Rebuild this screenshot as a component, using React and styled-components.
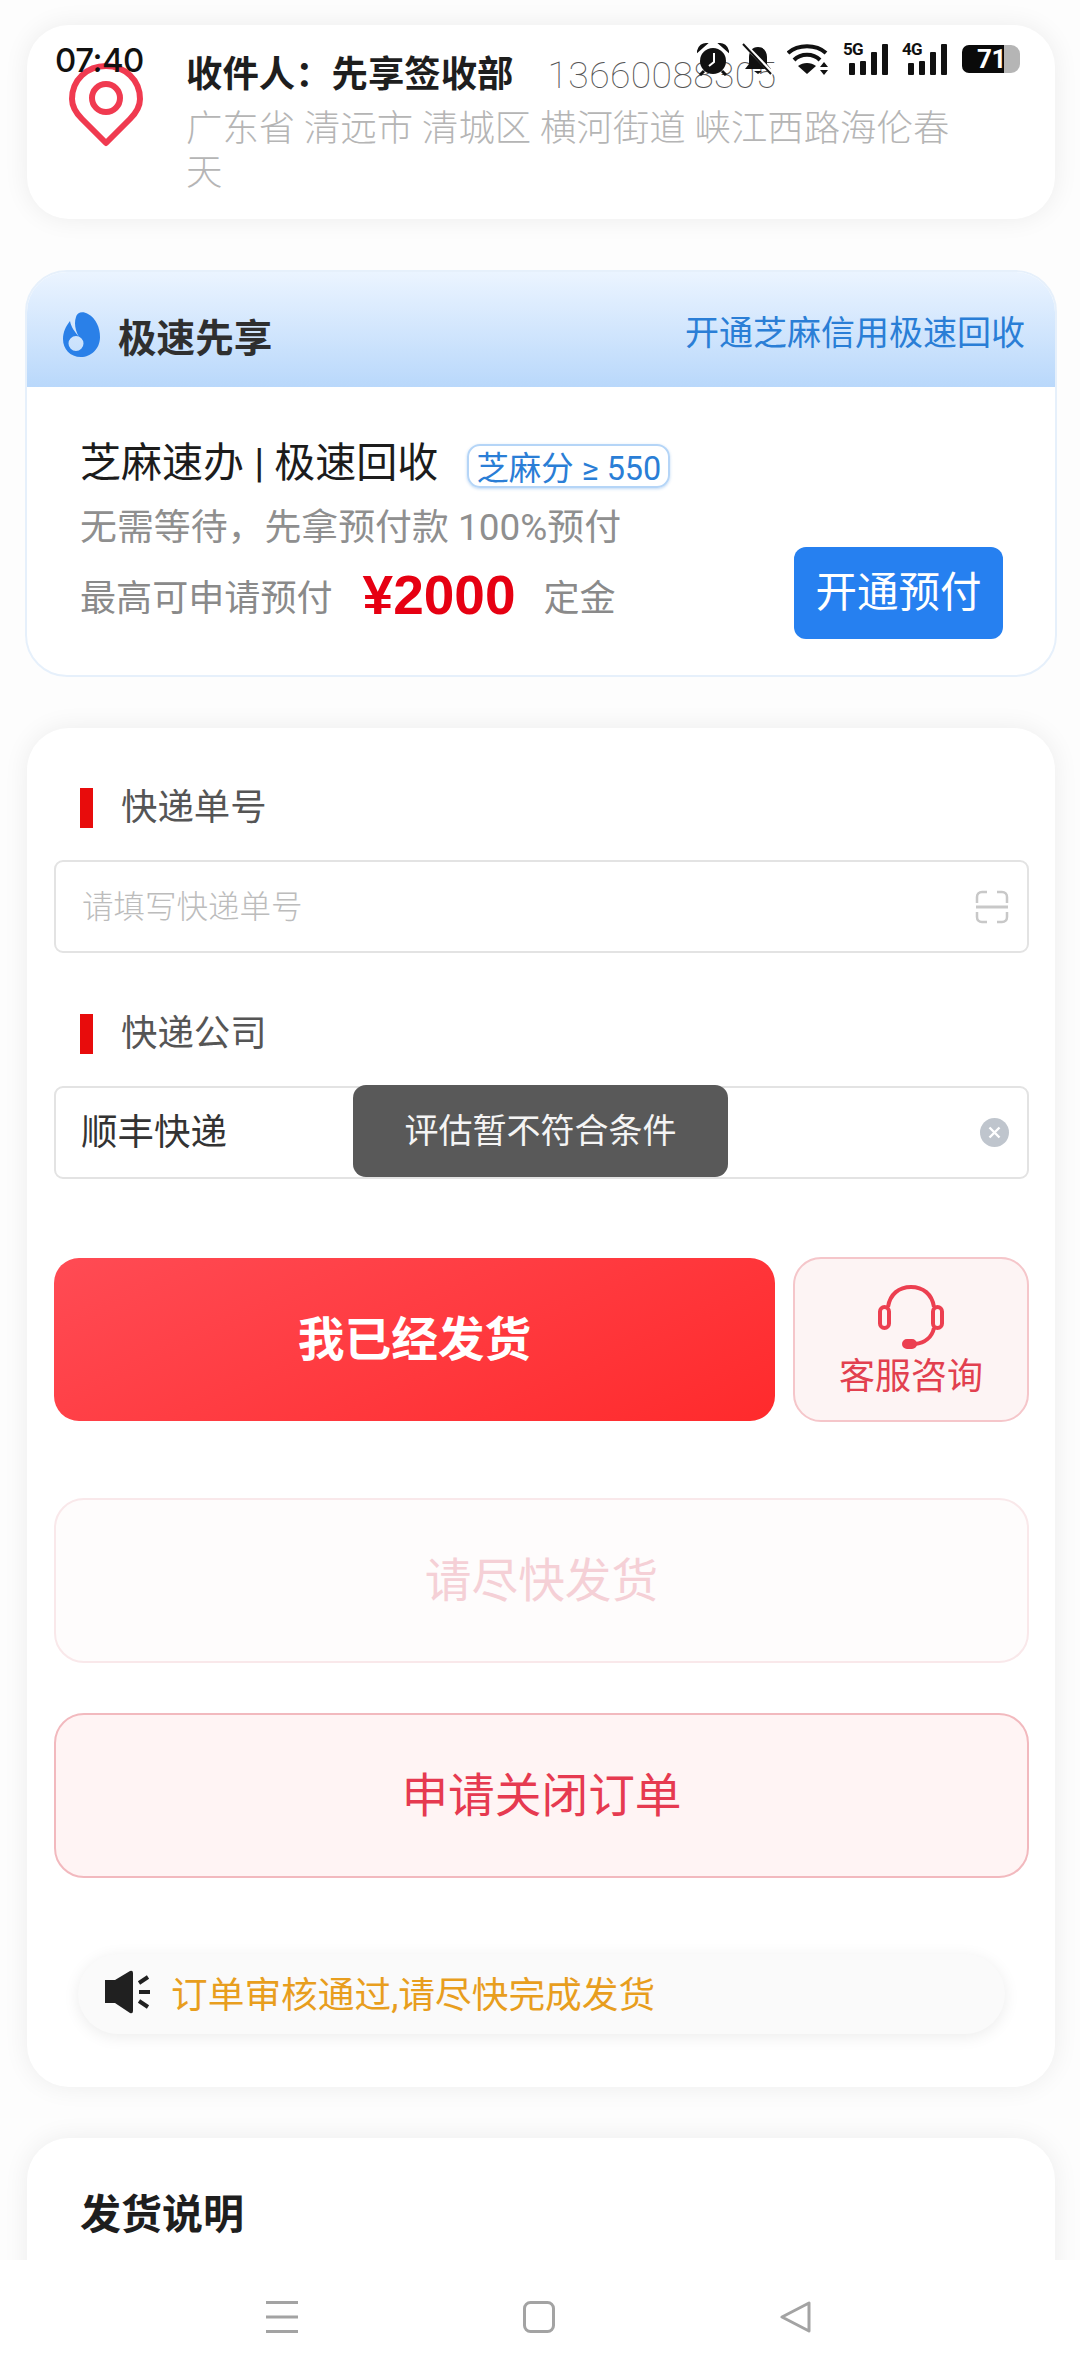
import React from "react";
import styled, { createGlobalStyle } from "styled-components";

const FONT = `Roboto, "Noto Sans CJK SC", sans-serif`;

const Global = createGlobalStyle`
  html, body { margin: 0; padding: 0; background: #fff; }
  * { box-sizing: border-box; }
`;

const Page = styled.div`
  position: relative;
  width: 1080px;
  height: 2376px;
  overflow: hidden;
  padding: 25px 25px 0 27px;
  display: flex;
  flex-direction: column;
  gap: 51px;
  background: #fdfdfd;
  font-family: ${FONT};
`;

/* status bar overlay */
const StatusBar = styled.div`
  position: absolute;
  top: 43px;
  left: 55px;
  right: 60px;
  height: 32px;
  display: flex;
  align-items: center;
  color: #111;
  z-index: 5;
`;
const Clock = styled.span`
  font: 500 33px/32px Inter, Roboto, sans-serif;
  letter-spacing: -0.5px;
  margin-top: 1px;
`;
const StatusIcons = styled.div`
  margin-left: auto;
  display: flex;
  align-items: center;
  gap: 13px;
`;
const Signal = styled.div`
  position: relative;
  width: 46px;
  height: 32px;
`;
const SignalLabel = styled.span`
  position: absolute;
  left: 0;
  top: -2px;
  font: 700 17px/17px Roboto, sans-serif;
  letter-spacing: -0.8px;
`;
const SignalSvg = styled.svg`
  position: absolute;
  right: 0;
  top: 0;
`;
const Battery = styled.div`
  position: relative;
  width: 58px;
  height: 28px;
  margin-left: 1px;
  border-radius: 7px 9px 9px 7px;
  background: linear-gradient(90deg, #0a0a0a 0, #0a0a0a 72%, #b5b5b5 72%, #b5b5b5 100%);
  display: flex;
  align-items: center;
  padding-left: 15px;
`;
const BatteryText = styled.span`
  font: 700 26px/28px Roboto, sans-serif;
  color: #fff;
  letter-spacing: -0.5px;
`;

/* cards */
const Card = styled.section`
  flex: none;
  background: #fff;
  border-radius: 42px;
  box-shadow: 0 0 26px rgba(0, 0, 0, 0.07);
`;

const AddressCard = styled(Card)`
  display: flex;
  align-items: flex-start;
  padding: 23px 40px 24px 42px;
  gap: 43px;
`;
const PinIcon = styled.svg`
  flex: none;
  margin-top: 15px;
`;
const AddressBody = styled.div`
  flex: 1;
  min-width: 0;
`;
const NameRow = styled.div`
  display: flex;
  align-items: center;
  height: 48px;
  gap: 34px;
`;
const Name = styled.span`
  font-size: 36.4px;
  font-weight: 700;
  color: #1e1e1e;
  white-space: nowrap;
  margin-bottom: 2px;
`;
const Phone = styled.span`
  font: 100 37.3px/48px Roboto, sans-serif;
  color: #555;
  letter-spacing: 0.4px;
  white-space: nowrap;
  margin-top: 6px;
`;
const Address = styled.div`
  margin-top: 11px;
  width: 772px;
  font-size: 36.4px;
  font-weight: 300;
  line-height: 44px;
  color: #b5b5b5;
`;

const CreditCard = styled(Card)`
  margin: 0 -2px;
  border: 2px solid #e6f0fb;
  overflow: hidden;
  box-shadow: none;
`;
const CreditHeader = styled.div`
  height: 115px;
  padding: 8px 30px 0 35px;
  display: flex;
  align-items: center;
  justify-content: space-between;
  background: linear-gradient(180deg, #ebf4ff 0%, #b9d8fb 100%);
`;
const CreditTitle = styled.div`
  display: flex;
  align-items: center;
  gap: 18px;
  padding-top: 2px;
  font-size: 38.6px;
  font-weight: 700;
  color: #2f2f2f;
`;
const CreditLink = styled.span`
  font-size: 34px;
  color: #2a7ed6;
  margin-bottom: 6px;
`;
const CreditBody = styled.div`
  display: flex;
  align-items: flex-end;
  justify-content: space-between;
  padding: 50px 52px 36px 53px;
`;
const CreditText = styled.div`
  padding-bottom: 16px;
`;
const CreditHeadline = styled.div`
  display: flex;
  align-items: center;
  height: 50px;
  padding-bottom: 6px;
  gap: 29px;
  font-size: 41px;
  color: #1c1c1c;
  white-space: nowrap;
`;
const ScoreBadge = styled.span`
  display: inline-flex;
  align-items: center;
  justify-content: center;
  width: 203px;
  height: 44px;
  margin-top: 13px;
  border: 2px solid #b5d5f7;
  border-radius: 13px;
  box-shadow: 0 1px 3px rgba(42, 126, 214, 0.3);
  font-size: 32.4px;
  color: #2a7ed6;
  white-space: nowrap;
`;
const CreditSub = styled.div`
  margin-top: 16px;
  font-size: 36.9px;
  line-height: 50px;
  color: #8f8f8f;
  white-space: nowrap;
`;
const CreditAmountRow = styled.div`
  margin-top: 20px;
  display: flex;
  align-items: center;
  height: 50px;
  padding-bottom: 6px;
  font-size: 36.1px;
  color: #8a8a8a;
  white-space: nowrap;
`;
const Amount = styled.span`
  margin: 0 28px 0 30px;
  font: 700 55px/50px "Liberation Sans", Arial, sans-serif;
  color: #e60012;
`;
const OpenButton = styled.div`
  flex: none;
  width: 209px;
  height: 92px;
  border-radius: 12px;
  background: #2680f0;
  color: #fff;
  font-size: 41.5px;
  display: flex;
  align-items: center;
  justify-content: center;
  padding-bottom: 9px;
`;

const FormCard = styled(Card)`
  padding: 60px 26px 53px 27px;
  display: flex;
  flex-direction: column;
`;
const FieldLabel = styled.div`
  display: flex;
  align-items: center;
  height: 40px;
  margin: ${(p) => (p.$first ? "0" : "61px")} 0 32px 26px;
  gap: 28px;
  font-size: 36.4px;
  color: #555;
`;
const FieldLabelText = styled.span`
  margin-bottom: 9px;
`;
const LabelBar = styled.i`
  display: block;
  width: 13px;
  height: 40px;
  background: #e80c0c;
`;
const Field = styled.div`
  height: 93px;
  border: 2px solid #e3e3e3;
  border-radius: 9px;
  padding: 0 18px 0 26px;
  display: flex;
  align-items: center;
  justify-content: space-between;
`;
const Placeholder = styled.span`
  font-size: 31.5px;
  font-weight: 300;
  color: #bcbcbc;
  margin-bottom: 6px;
`;
const FieldValue = styled.span`
  font-size: 36.5px;
  color: #333;
  margin: 0 0 6px -1px;
`;
const ClearDot = styled.span`
  width: 29px;
  height: 29px;
  border-radius: 50%;
  background: #bfc5cd;
  display: flex;
  align-items: center;
  justify-content: center;
`;

const Toast = styled.div`
  position: absolute;
  left: 353px;
  top: 1085px;
  width: 375px;
  height: 92px;
  border-radius: 13px;
  background: #595959;
  color: #f4f4f4;
  font-size: 34px;
  display: flex;
  align-items: center;
  justify-content: center;
  padding-bottom: 5px;
  z-index: 3;
`;

const ActionRow = styled.div`
  margin-top: 78px;
  display: flex;
  gap: 18px;
  height: 165px;
`;
const ShipButton = styled.div`
  flex: 1;
  margin: 1px 0;
  border-radius: 25px;
  background: linear-gradient(155deg, #ff4b54 0%, #ff2a2c 100%);
  color: #fff;
  font-size: 46.7px;
  font-weight: 700;
  display: flex;
  align-items: center;
  justify-content: center;
  padding-bottom: 8px;
`;
const ServiceButton = styled.div`
  flex: none;
  width: 236px;
  border: 2px solid #f5c6ca;
  border-radius: 28px;
  background: #fdf4f4;
  color: #e2404f;
  font-size: 36px;
  line-height: 44px;
  display: flex;
  flex-direction: column;
  align-items: center;
  padding-top: 26px;
  gap: 4px;
`;
const WideButton = styled.div`
  height: 165px;
  margin-top: ${(p) => p.$top}px;
  border: 2px solid ${(p) => (p.$faded ? "#f9e8ea" : "#f2b9be")};
  border-radius: 30px;
  background: ${(p) => (p.$faded ? "#fefcfc" : "#fff4f4")};
  color: ${(p) => (p.$faded ? "#f5d0d6" : "#e63a50")};
  font-size: 46.7px;
  display: flex;
  align-items: center;
  justify-content: center;
  padding-bottom: 8px;
`;
const Notice = styled.div`
  height: 80px;
  margin: 76px 24px 0;
  border-radius: 40px;
  background: #fafafa;
  box-shadow: 0 3px 16px rgba(0, 0, 0, 0.08);
  display: flex;
  align-items: center;
  padding: 0 0 4px 27px;
  gap: 20px;
  font-size: 36.7px;
  color: #e89e1e;
  white-space: nowrap;
`;

const GuideCard = styled(Card)`
  padding: 52px 53px 80px;
  min-height: 240px;
`;
const GuideTitle = styled.h2`
  margin: 0;
  font-size: 41px;
  line-height: 50px;
  font-weight: 700;
  color: #1e1e1e;
`;

const NavBar = styled.nav`
  position: absolute;
  left: 0;
  right: 0;
  bottom: 0;
  height: 116px;
  background: #fff;
  display: flex;
  align-items: flex-start;
  justify-content: center;
  gap: 225px;
  padding: 41px 4px 0 0;
  z-index: 4;
`;

const Pin = () => (
  <PinIcon width="74" height="84" viewBox="0 0 74 84" fill="none" stroke="#f03a50" strokeWidth="6">
    <path d="M37 80 L13 56 C7 50 3 43 3 36 C3 17 18 3 37 3 C56 3 71 17 71 36 C71 43 67 50 61 56 Z" strokeLinejoin="round" />
    <circle cx="37" cy="35" r="14" />
  </PinIcon>
);

const Drop = () => (
  <svg width="38" height="46" viewBox="0 0 38 46">
    <path
      fill="#2a80e8"
      fillRule="evenodd"
      d="M14 5 C15 0 21 -1 26 2 C34 6 38 16 38 25 C38 37 29 45 19 45 C8 45 1 37 1 27 C1 20 4 14 8 9 C9 15 13 20 17 25 C13 18 12 11 14 5 Z M14 24 A7.5 7.5 0 1 0 14 39 A7.5 7.5 0 1 0 14 24 Z"
    />
  </svg>
);

const Headset = () => (
  <svg width="66" height="66" viewBox="0 0 66 66" fill="none" stroke="#ec3f50" strokeWidth="4">
    <path d="M10 22 C12 9 21 2 33 2 C45 2 54 9 56 22" />
    <rect x="2" y="22" width="9" height="21" rx="4.5" />
    <rect x="55" y="22" width="9" height="21" rx="4.5" />
    <path d="M56 43 C54 52 47 58 37 59" />
    <rect x="26" y="56" width="11" height="6" rx="3" fill="#ec3f50" />
  </svg>
);

const Speaker = () => (
  <svg width="46" height="44" viewBox="0 0 46 44" fill="#202020">
    <path d="M0 10 H10 L25 1 Q28 0 28 3 V41 Q28 44 25 43 L10 33 H0 Z" />
    <path d="M34 13 L43 7 M34 22 H45 M34 31 L43 37" stroke="#202020" strokeWidth="4" />
  </svg>
);

const Scan = () => (
  <svg width="34" height="34" viewBox="0 0 34 34" fill="none" stroke="#c8c8c8" strokeWidth="2.5">
    <path d="M2 13 V7 C2 4 4 2 7 2 H12 M22 2 H27 C30 2 32 4 32 7 V13 M2 22 V27 C2 30 4 32 7 32 H12 M22 32 H27 C30 32 32 30 32 27 V22" />
    <path d="M1 17 H33" strokeWidth="3" />
  </svg>
);

const Alarm = () => (
  <svg width="32" height="33" viewBox="0 0 32 33" fill="#111">
    <circle cx="16" cy="18" r="13" />
    <path d="M1 8 C2 3 6 1 9 1 L1 8 Z M31 8 C30 3 26 1 23 1 L31 8 Z" stroke="#111" strokeWidth="2" />
    <path d="M7 28 L3 32 M25 28 L29 32" stroke="#111" strokeWidth="3" />
    <path d="M17 10 V19 L12 23" stroke="#fff" strokeWidth="2" fill="none" />
  </svg>
);

const BellOff = () => (
  <svg width="32" height="32" viewBox="0 0 32 32" fill="#111">
    <path d="M16 4 C22 4 25 9 25 14 V21 L29 26 H3 L7 21 V14 C7 9 10 4 16 4 Z" />
    <path d="M12 28 H20 L16 31 Z" />
    <path d="M2 1 L31 31" stroke="#fff" strokeWidth="4" />
    <path d="M1 1 L29 31" stroke="#111" strokeWidth="2" />
  </svg>
);

const Wifi = () => (
  <svg width="43" height="32" viewBox="0 0 43 32" fill="none" stroke="#111" strokeWidth="4">
    <path d="M1 10 C11 1 29 1 39 10" />
    <path d="M7 17 C14 10 26 10 33 17" />
    <path d="M20 31 L11 23 C16 19 24 19 29 23 Z" fill="#111" stroke="none" />
    <path d="M33 24 L37 19 L41 24 Z M33 27 L37 32 L41 27 Z" fill="#111" stroke="none" />
  </svg>
);

const Bars = () => (
  <SignalSvg width="46" height="32" viewBox="0 0 46 32" fill="#111">
    <rect x="6" y="20" width="6" height="12" rx="1" />
    <rect x="17" y="18" width="6" height="14" rx="1" />
    <rect x="28" y="9" width="6" height="23" rx="1" />
    <rect x="39" y="1" width="6" height="31" rx="1" />
  </SignalSvg>
);

const NavMenu = () => (
  <svg width="32" height="32" viewBox="0 0 32 32" stroke="#a3a3a3" strokeWidth="3">
    <path d="M0 1.5 H32 M0 16 H32 M0 30.5 H32" />
  </svg>
);
const NavHome = () => (
  <svg width="32" height="32" viewBox="0 0 32 32" fill="none" stroke="#a3a3a3" strokeWidth="3">
    <rect x="1.5" y="1.5" width="29" height="29" rx="6" />
  </svg>
);
const NavBack = () => (
  <svg width="31" height="32" viewBox="0 0 31 32" fill="none" stroke="#a3a3a3" strokeWidth="3" strokeLinejoin="round">
    <path d="M29 2 V30 L2 16 Z" />
  </svg>
);

export default function App() {
  return (
    <Page>
      <Global />
      <StatusBar>
        <Clock>07:40</Clock>
        <StatusIcons>
          <Alarm />
          <BellOff />
          <Wifi />
          <Signal>
            <SignalLabel>5G</SignalLabel>
            <Bars />
          </Signal>
          <Signal>
            <SignalLabel>4G</SignalLabel>
            <Bars />
          </Signal>
          <Battery>
            <BatteryText>71</BatteryText>
          </Battery>
        </StatusIcons>
      </StatusBar>

      <AddressCard>
        <Pin />
        <AddressBody>
          <NameRow>
            <Name>收件人：先享签收部</Name>
            <Phone>13660088305</Phone>
          </NameRow>
          <Address>广东省 清远市 清城区 横河街道 峡江西路海伦春天</Address>
        </AddressBody>
      </AddressCard>

      <CreditCard>
        <CreditHeader>
          <CreditTitle>
            <Drop />
            极速先享
          </CreditTitle>
          <CreditLink>开通芝麻信用极速回收</CreditLink>
        </CreditHeader>
        <CreditBody>
          <CreditText>
            <CreditHeadline>
              芝麻速办 | 极速回收
              <ScoreBadge>芝麻分 ≥ 550</ScoreBadge>
            </CreditHeadline>
            <CreditSub>无需等待，先拿预付款 100%预付</CreditSub>
            <CreditAmountRow>
              最高可申请预付
              <Amount>¥2000</Amount>
              定金
            </CreditAmountRow>
          </CreditText>
          <OpenButton>开通预付</OpenButton>
        </CreditBody>
      </CreditCard>

      <FormCard>
        <FieldLabel $first>
          <LabelBar />
          <FieldLabelText>快递单号</FieldLabelText>
        </FieldLabel>
        <Field>
          <Placeholder>请填写快递单号</Placeholder>
          <Scan />
        </Field>
        <FieldLabel>
          <LabelBar />
          <FieldLabelText>快递公司</FieldLabelText>
        </FieldLabel>
        <Field>
          <FieldValue>顺丰快递</FieldValue>
          <ClearDot>
            <svg width="13" height="13" viewBox="0 0 13 13" stroke="#fff" strokeWidth="2.4">
              <path d="M1.5 1.5 L11.5 11.5 M11.5 1.5 L1.5 11.5" />
            </svg>
          </ClearDot>
        </Field>
        <ActionRow>
          <ShipButton>我已经发货</ShipButton>
          <ServiceButton>
            <Headset />
            客服咨询
          </ServiceButton>
        </ActionRow>
        <WideButton $faded $top={76}>请尽快发货</WideButton>
        <WideButton $top={50}>申请关闭订单</WideButton>
        <Notice>
          <Speaker />
          订单审核通过,请尽快完成发货
        </Notice>
      </FormCard>

      <GuideCard>
        <GuideTitle>发货说明</GuideTitle>
      </GuideCard>

      <Toast>评估暂不符合条件</Toast>

      <NavBar>
        <NavMenu />
        <NavHome />
        <NavBack />
      </NavBar>
    </Page>
  );
}
